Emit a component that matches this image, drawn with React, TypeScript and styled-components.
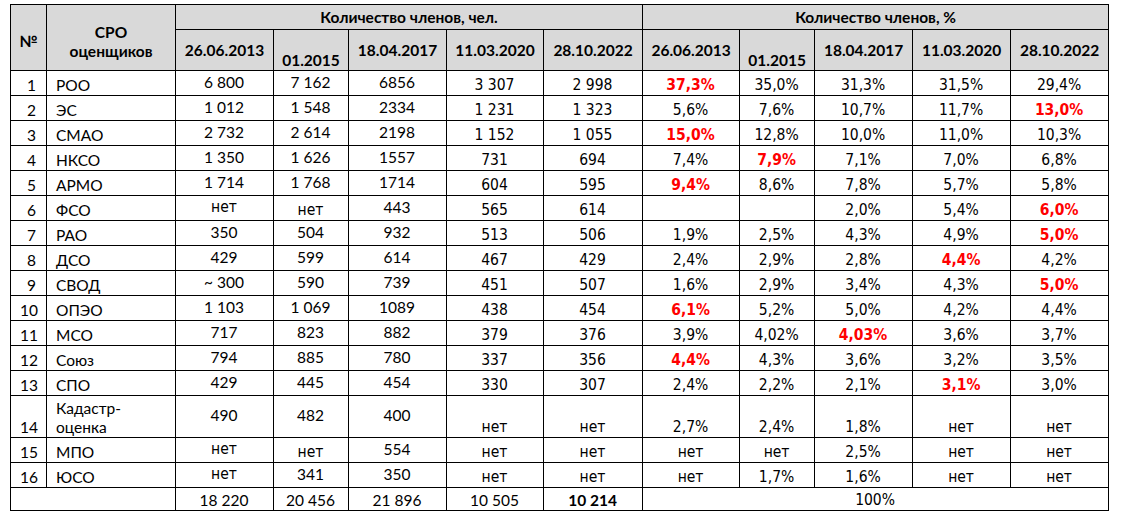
import styled, { createGlobalStyle } from "styled-components";

const GlobalStyle = createGlobalStyle`
  body {
    margin: 0;
    background: #ffffff;
  }
`;

const CAL = `"Lato", "Carlito", "Liberation Sans", sans-serif`;
const TAH = `"DejaVu Sans Condensed", "DejaVu Sans", sans-serif`;

const Page = styled.div`
  padding: 4px 0 0 10px;
`;

const Table = styled.table`
  border-collapse: collapse;
  table-layout: fixed;
  width: 1099px;
  color: #000;
`;

const Row = styled.tr<{ $h: number }>`
  height: ${(p) => p.$h}px;
`;

const Head = styled.th<{ $valign?: string; $lower?: boolean }>`
  background: #d9d9d9;
  border: 1px solid #000;
  font-family: ${CAL};
  font-weight: 700;
  font-size: 15.5px;
  line-height: ${(p) => (p.$lower ? "19px" : "18px")};
  text-align: center;
  vertical-align: ${(p) => p.$valign ?? "middle"};
  padding: ${(p) => (p.$lower ? "8px" : "0")} 4px
    ${(p) => (p.$valign === "bottom" ? "1px" : "0")};
  white-space: nowrap;
`;

type CellProps = {
  $align?: "left" | "center" | "right";
  $valign?: "middle" | "bottom";
  $tah?: boolean;
  $red?: boolean;
  $bold?: boolean;
};

const Cell = styled.td<CellProps>`
  border: 1px solid #000;
  font-family: ${(p) => (p.$tah ? TAH : CAL)};
  font-size: 15.5px;
  font-weight: ${(p) => (p.$bold || p.$red ? 700 : 400)};
  color: ${(p) => (p.$red ? "#ff0000" : "#000")};
  line-height: 19px;
  text-align: ${(p) => p.$align ?? "center"};
  vertical-align: ${(p) => p.$valign ?? "bottom"};
  padding: 0 10px ${(p) => (p.$valign === "middle" ? "2px" : "0")} 9px;
  white-space: nowrap;
`;

const NameCell = styled(Cell)`
  white-space: normal;
`;

const widths = [36, 129, 98, 75, 98, 97, 99, 97, 75, 98, 98, 98];
const dates = ["26.06.2013", "01.2015", "18.04.2017", "11.03.2020", "28.10.2022"];

type Data = {
  n: number;
  name: string;
  counts: string[];
  pct: string[];
  red: number[];
  h?: number;
};

const rows: Data[] = [
  { n: 1, name: "РОО", counts: ["6 800", "7 162", "6856", "3 307", "2 998"], pct: ["37,3%", "35,0%", "31,3%", "31,5%", "29,4%"], red: [0] },
  { n: 2, name: "ЭС", counts: ["1 012", "1 548", "2334", "1 231", "1 323"], pct: ["5,6%", "7,6%", "10,7%", "11,7%", "13,0%"], red: [4] },
  { n: 3, name: "СМАО", counts: ["2 732", "2 614", "2198", "1 152", "1 055"], pct: ["15,0%", "12,8%", "10,0%", "11,0%", "10,3%"], red: [0] },
  { n: 4, name: "НКСО", counts: ["1 350", "1 626", "1557", "731", "694"], pct: ["7,4%", "7,9%", "7,1%", "7,0%", "6,8%"], red: [1] },
  { n: 5, name: "АРМО", counts: ["1 714", "1 768", "1714", "604", "595"], pct: ["9,4%", "8,6%", "7,8%", "5,7%", "5,8%"], red: [0] },
  { n: 6, name: "ФСО", counts: ["нет", "нет", "443", "565", "614"], pct: ["", "", "2,0%", "5,4%", "6,0%"], red: [4] },
  { n: 7, name: "РАО", counts: ["350", "504", "932", "513", "506"], pct: ["1,9%", "2,5%", "4,3%", "4,9%", "5,0%"], red: [4] },
  { n: 8, name: "ДСО", counts: ["429", "599", "614", "467", "429"], pct: ["2,4%", "2,9%", "2,8%", "4,4%", "4,2%"], red: [3] },
  { n: 9, name: "СВОД", counts: ["~ 300", "590", "739", "451", "507"], pct: ["1,6%", "2,9%", "3,4%", "4,3%", "5,0%"], red: [4] },
  { n: 10, name: "ОПЭО", counts: ["1 103", "1 069", "1089", "438", "454"], pct: ["6,1%", "5,2%", "5,0%", "4,2%", "4,4%"], red: [0] },
  { n: 11, name: "МСО", counts: ["717", "823", "882", "379", "376"], pct: ["3,9%", "4,02%", "4,03%", "3,6%", "3,7%"], red: [2] },
  { n: 12, name: "Союз", counts: ["794", "885", "780", "337", "356"], pct: ["4,4%", "4,3%", "3,6%", "3,2%", "3,5%"], red: [0] },
  { n: 13, name: "СПО", counts: ["429", "445", "454", "330", "307"], pct: ["2,4%", "2,2%", "2,1%", "3,1%", "3,0%"], red: [3] },
  { n: 14, name: "Кадастр-оценка", counts: ["490", "482", "400", "нет", "нет"], pct: ["2,7%", "2,4%", "1,8%", "нет", "нет"], red: [], h: 42 },
  { n: 15, name: "МПО", counts: ["нет", "нет", "554", "нет", "нет"], pct: ["нет", "нет", "2,5%", "нет", "нет"], red: [] },
  { n: 16, name: "ЮСО", counts: ["нет", "341", "350", "нет", "нет"], pct: ["нет", "1,7%", "1,6%", "нет", "нет"], red: [] },
];

const totals = ["18 220", "20 456", "21 896", "10 505", "10 214"];

const CountCell = ({ value, col }: { value: string; col: number }) => {
  const isNo = value === "нет";
  if (col < 3) {
    return (
      <Cell $tah={isNo} $valign={isNo && col === 1 ? "bottom" : "middle"}>
        {value}
      </Cell>
    );
  }
  return <Cell $tah>{value}</Cell>;
};

export default function App() {
  return (
    <Page>
      <GlobalStyle />
      <Table>
        <colgroup>
          {widths.map((w, i) => (
            <col key={i} style={{ width: w }} />
          ))}
        </colgroup>
        <thead>
          <Row $h={25}>
            <Head rowSpan={2} $lower>
              №
            </Head>
            <Head rowSpan={2} $lower>
              СРО
              <br />
              оценщиков
            </Head>
            <Head colSpan={5}>Количество членов, чел.</Head>
            <Head colSpan={5}>Количество членов, %</Head>
          </Row>
          <Row $h={41}>
            {[...dates, ...dates].map((d, i) => (
              <Head key={i} $valign={d === "01.2015" ? "bottom" : "middle"}>
                {d}
              </Head>
            ))}
          </Row>
        </thead>
        <tbody>
          {rows.map((r) => (
            <Row key={r.n} $h={r.h ?? 25}>
              <Cell $align="right">{r.n}</Cell>
              <NameCell $align="left">{r.name}</NameCell>
              {r.counts.map((c, i) => (
                <CountCell key={i} value={c} col={i} />
              ))}
              {r.pct.map((p, i) => (
                <Cell key={i} $tah $red={r.red.includes(i)}>
                  {p}
                </Cell>
              ))}
            </Row>
          ))}
          <Row $h={23}>
            <Cell colSpan={2} />
            {totals.map((t, i) => (
              <Cell key={i} $bold={i === 4}>
                {t}
              </Cell>
            ))}
            <Cell colSpan={5} $tah>
              100%
            </Cell>
          </Row>
        </tbody>
      </Table>
    </Page>
  );
}
